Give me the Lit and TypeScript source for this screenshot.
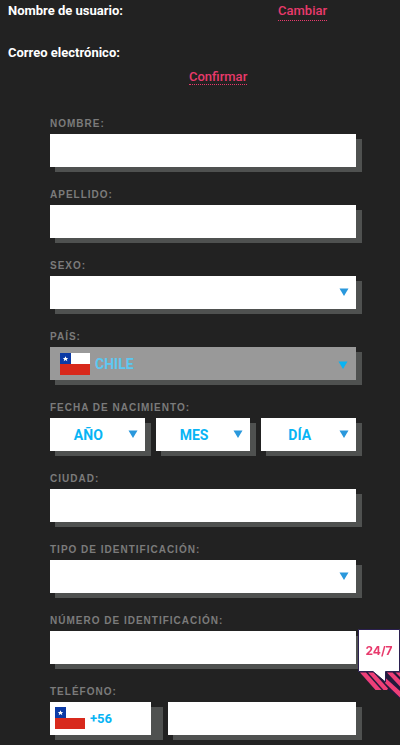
import { LitElement, html, css, nothing } from "lit";
import { customElement } from "lit/decorators.js";

const arrow = html`<svg class="arrow" width="10" height="8" viewBox="0 0 10 8" aria-hidden="true">
  <path d="M0.5 0.5H9.5L5 8Z" fill="currentColor" />
</svg>`;

const flag = html`<svg class="flag" width="30" height="22" viewBox="0 0 30 22" aria-hidden="true">
  <rect width="30" height="22" fill="#fff" />
  <rect width="11" height="11" fill="#0b3aa5" />
  <rect y="11" width="30" height="11" fill="#d8291c" />
  <path d="M5.5 3.2L6.3 5H8.2L6.8 6.2L7.3 8.2L5.5 7.1L3.7 8.2L4.2 6.2L2.8 5H4.7Z" fill="#fff" />
</svg>`;

@customElement("app-root")
export class AppRoot extends LitElement {
  static styles = css`
    :host {
      display: block;
      box-sizing: border-box;
      min-height: 100vh;
      background: #222;
      color: #fff;
      font-family: Roboto, "Liberation Sans", sans-serif;
      font-size: 13px;
      line-height: 16px;
      padding: 3px 0 10px;
    }
    * {
      box-sizing: border-box;
    }
    .account {
      display: grid;
      grid-template-columns: 270px 1fr;
      row-gap: 26px;
      padding: 0 8px;
      font-weight: 700;
    }
    .mail {
      grid-column: 1 / 3;
    }
    .confirm {
      padding: 8px 8px 0 189px;
    }
    a {
      display: inline-block;
      color: #e83a6c;
      font-weight: 500;
      text-decoration: none;
      border-bottom: 1px dotted #e83a6c;
    }
    .links {
      height: 16px;
    }
    .links a {
      padding-bottom: 1px;
    }
    .confirm a {
      line-height: 15px;
    }
    form {
      display: flex;
      flex-direction: column;
      gap: 22px;
      margin: 33px 44px 0 50px;
    }
    .field {
      display: flex;
      flex-direction: column;
      gap: 4px;
      min-width: 0;
    }
    .label {
      display: block;
      font: 700 10px/12px "Liberation Sans", Arial, sans-serif;
      letter-spacing: 1px;
      text-transform: uppercase;
      color: #7b7b7b;
    }
    .box {
      position: relative;
      flex: 1;
      min-width: 0;
      display: flex;
      color: #2a98dc;
    }
    .control {
      appearance: none;
      width: 100%;
      height: 33px;
      margin: 0;
      padding: 0 10px;
      border: 0;
      border-radius: 0;
      outline: 0;
      background: #fff;
      box-shadow: 5px 5px #4f5150, 6px 5px #4f5150;
      color: #08b4f4;
      font: 700 14px/16px Roboto, "Liberation Sans", sans-serif;
      opacity: 1;
    }
    .arrow {
      position: absolute;
      right: 7px;
      top: 12px;
      pointer-events: none;
    }
    .flag {
      position: absolute;
      left: 10px;
      top: 6px;
      pointer-events: none;
    }
    .country {
      color: #08b4f4;
    }
    .country .control {
      background: #999;
      color: #5cc8f2;
      padding-left: 45px;
    }
    .country .arrow {
      top: 14px;
      right: 8px;
    }
    .row {
      display: flex;
      gap: 11px;
    }
    .row .control {
      text-align: center;
      text-align-last: center;
      padding: 0 28px 0 10px;
    }
    .phone {
      display: flex;
      gap: 17px;
    }
    .prefix {
      flex: 0 0 101px;
    }
    .prefix .control {
      padding: 0 0 0 40px;
      font-size: 13px;
      box-shadow: 5px 5px #4f5150, 12px 5px #4f5150;
    }
    .prefix .flag {
      left: 5px;
      top: 5px;
    }
    .help {
      position: fixed;
      right: 0;
      top: 629px;
      width: 42px;
      height: 70px;
      padding: 0;
      border: 0;
      background: none;
      color: #e83a6c;
      font: 700 12px/43px Inter, "Open Sans", sans-serif;
    }
    .help svg,
    .help span {
      position: absolute;
      inset: 0;
    }
  `;

  private text(id: string, label: string) {
    return html`<div class="field">
      <label class="label" for=${id}>${label}</label>
      <div class="box"><input class="control" id=${id} type="text" /></div>
    </div>`;
  }

  private select(id: string, label: string, value = "") {
    return html`<div class="field">
      <label class="label" for=${id}>${label}</label>
      <div class="box ${value ? "country" : ""}">
        <select class="control" id=${id}><option>${value}</option></select>
        ${value ? flag : nothing}${arrow}
      </div>
    </div>`;
  }

  render() {
    return html`
      <div class="account">
        <div>Nombre de usuario:</div>
        <div class="links"><a href="#cambiar">Cambiar</a></div>
        <div class="mail">Correo electrónico:</div>
      </div>
      <div class="confirm"><a href="#confirmar">Confirmar</a></div>
      <form>
        ${this.text("nombre", "Nombre:")}
        ${this.text("apellido", "Apellido:")}
        ${this.select("sexo", "Sexo:")}
        ${this.select("pais", "País:", "CHILE")}
        <div class="field" role="group" aria-labelledby="fecha">
          <span class="label" id="fecha">Fecha de nacimiento:</span>
          <div class="row">
            ${["AÑO", "MES", "DÍA"].map(
              (part) => html`<div class="box">
                <select class="control" aria-label=${part}><option>${part}</option></select>${arrow}
              </div>`
            )}
          </div>
        </div>
        ${this.text("ciudad", "Ciudad:")}
        ${this.select("tipo", "Tipo de identificación:")}
        ${this.text("numero", "Número de identificación:")}
        <div class="field">
          <label class="label" for="telefono">Teléfono:</label>
          <div class="phone">
            <div class="box prefix">
              <input class="control" aria-label="Prefijo" type="text" .value=${"+56"} />${flag}
            </div>
            <div class="box"><input class="control" id="telefono" type="tel" /></div>
          </div>
        </div>
      </form>
      <button class="help" type="button">
        <svg width="42" height="70" viewBox="0 0 42 70" aria-hidden="true">
          <path d="M0 42H42V70L30 61H17Z" fill="#231a3c" />
          <g fill="#ee3f78">
            <path d="M2 43.500H8L23.500 61H17.500Z" />
            <path d="M10 43.500H15.500L30 59.500L29 61H25.500Z" />
            <path d="M27 48.500L42 62V68.500L27 54Z" />
            <path d="M29 43.500H34.500L42 51V57.500Z" />
            <path d="M37.500 43.500H42V48Z" />
          </g>
          <path d="M0.500 0.500H41.500V42.500H27.500V53L15 42.500H0.500Z" fill="#fff" stroke="#2b2050" />
        </svg>
        <span>24/7</span>
      </button>
    `;
  }
}
